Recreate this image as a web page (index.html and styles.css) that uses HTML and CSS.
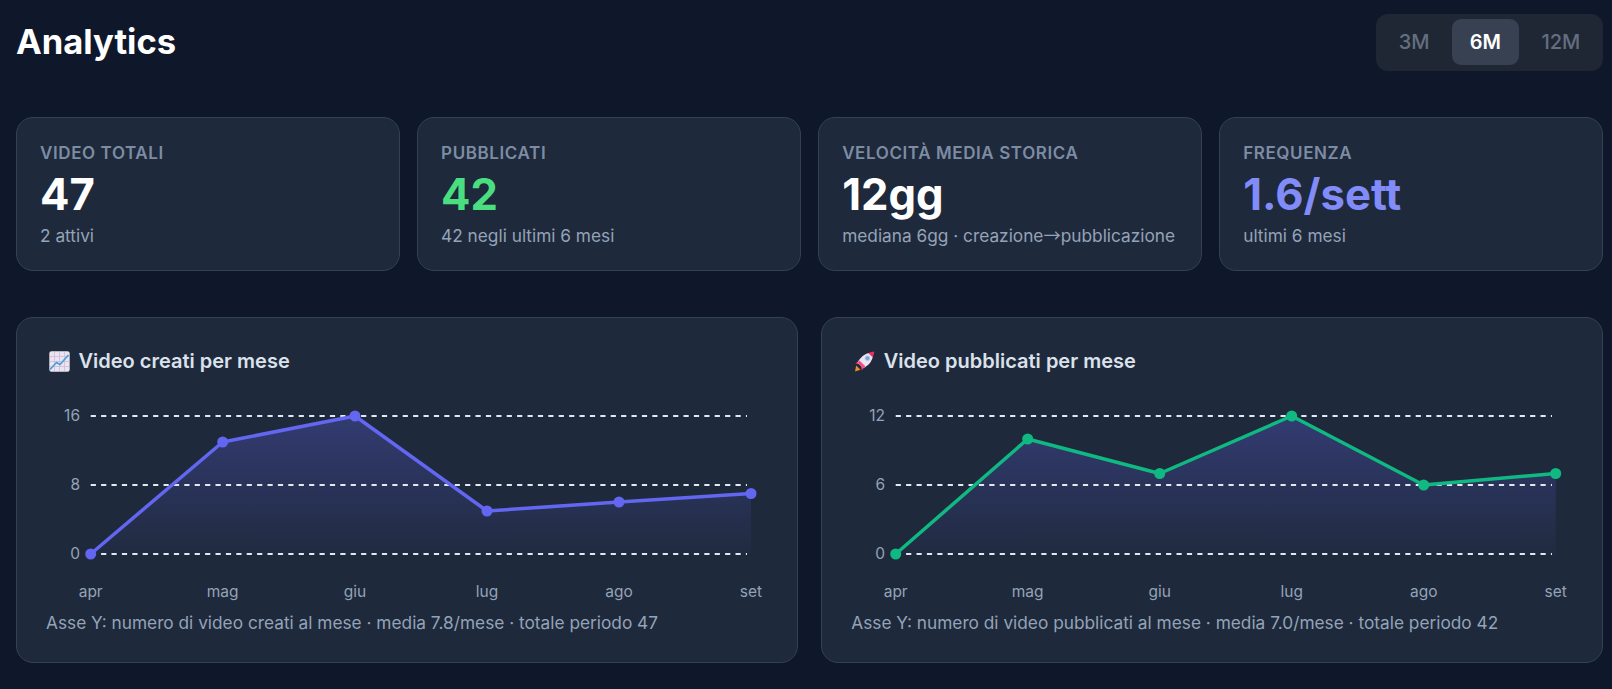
FILE: index.html
```html
<!DOCTYPE html>
<html lang="it">
<head>
<meta charset="utf-8">
<title>Analytics</title>
<link rel="stylesheet" href="styles.css">
</head>
<body>
<main class="page">
  <header class="top">
    <h1 class="title">Analytics</h1>
    <div class="range">
      <button class="range-btn">3M</button>
      <button class="range-btn active">6M</button>
      <button class="range-btn">12M</button>
    </div>
  </header>

  <section class="stats">
    <div class="stat">
      <div class="stat-label">VIDEO TOTALI</div>
      <div class="stat-value">47</div>
      <div class="stat-sub">2 attivi</div>
    </div>
    <div class="stat">
      <div class="stat-label">PUBBLICATI</div>
      <div class="stat-value green">42</div>
      <div class="stat-sub">42 negli ultimi 6 mesi</div>
    </div>
    <div class="stat">
      <div class="stat-label">VELOCITÀ MEDIA STORICA</div>
      <div class="stat-value">12gg</div>
      <div class="stat-sub">mediana 6gg · creazione<span class="arrow">→</span>pubblicazione</div>
    </div>
    <div class="stat">
      <div class="stat-label">FREQUENZA</div>
      <div class="stat-value purple">1.6/sett</div>
      <div class="stat-sub">ultimi 6 mesi</div>
    </div>
  </section>

  <section class="charts">
    <article class="chart-card">
      <h2 class="chart-title">
        <svg class="emoji" viewBox="0 0 21 21">
          <rect x="0.3" y="0.3" width="20.4" height="20.4" rx="2.2" fill="#ebe3ef"/>
          <path d="M5.5 1V20M10.5 1V20M15.5 1V20M1 5.5H20M1 10.5H20M1 15.5H20" stroke="#cbbdd8" stroke-width="0.8" fill="none"/>
          <path d="M1 18.5L7.5 11.5L11 13.5L19.5 4" stroke="#4a9ede" stroke-width="1.7" fill="none"/>
        </svg>
        Video creati per mese
      </h2>
      <svg class="plot">
        <defs>
          <linearGradient id="fillA" x1="0" y1="0" x2="0" y2="1">
            <stop offset="0" stop-color="#6366f1" stop-opacity="0.3"/>
            <stop offset="1" stop-color="#6366f1" stop-opacity="0.03"/>
          </linearGradient>
        </defs>
        <path class="area" d="M44.7 169L176.7 57L309 31L441 126L573 117L705 108.500V169Z" fill="url(#fillA)"/>
        <path class="grid" d="M44.700 31H701M44.700 100H701M44.700 169H701"/>
        <polyline class="line indigo" points="44.700,169 176.700,57 309,31 441,126 573,117 705,108.500"/>
        <g class="dots indigo-fill">
          <circle cx="44.700" cy="169" r="5.500"/><circle cx="176.700" cy="57" r="5.500"/><circle cx="309" cy="31" r="5.500"/><circle cx="441" cy="126" r="5.500"/><circle cx="573" cy="117" r="5.500"/><circle cx="705" cy="108.500" r="5.500"/>
        </g>
        <g class="y-labels">
          <text x="34" y="36">16</text><text x="34" y="105">8</text><text x="34" y="174">0</text>
        </g>
        <g class="x-labels">
          <text x="44.700" y="212">apr</text><text x="176.700" y="212">mag</text><text x="309" y="212">giu</text><text x="441" y="212">lug</text><text x="573" y="212">ago</text><text x="705" y="212">set</text>
        </g>
      </svg>
      <p class="note">Asse Y: numero di video creati al mese · media 7.8/mese · totale periodo 47</p>
    </article>

    <article class="chart-card">
      <h2 class="chart-title">
        <svg class="emoji" viewBox="0 0 21 21">
          <path d="M1 20.500L2.200 14.500L6.500 18.800Z" fill="#f08a24"/>
          <path d="M4 10.500L1.500 12.500L6 13.500Z" fill="#f5336e"/>
          <path d="M9.500 17L7.800 19.600L7 15Z" fill="#f5336e"/>
          <path d="M3.500 11.500C6.500 6 11 2.500 16 1.800L19 4.800C18.200 10 14.800 14.500 9.300 17.300Z" fill="#ece4ee"/>
          <path d="M14.500 2.300C16.500 1.300 18.500 0.800 20.300 0.600C20.100 2.500 19.600 4.500 18.500 6.300Z" fill="#ef2f63"/>
          <path d="M3.500 11.500L5.500 9.500L11.300 15.300L9.300 17.300Z" fill="#f24d86"/>
          <circle cx="13.500" cy="7.300" r="2.700" fill="#b8c4d8"/>
          <circle cx="13.500" cy="7.300" r="1.800" fill="#6aa6ea"/>
        </svg>
        Video pubblicati per mese
      </h2>
      <svg class="plot">
        <defs>
          <linearGradient id="fillB" x1="0" y1="0" x2="0" y2="1">
            <stop offset="0" stop-color="#6366f1" stop-opacity="0.3"/>
            <stop offset="1" stop-color="#6366f1" stop-opacity="0.03"/>
          </linearGradient>
        </defs>
        <path class="area" d="M44.700 169L176.700 54L308.700 88.500L440.700 31L572.700 100L704.700 88.500V169Z" fill="url(#fillB)"/>
        <path class="grid" d="M44.700 31H701M44.700 100H701M44.700 169H701"/>
        <polyline class="line emerald" points="44.700,169 176.700,54 308.700,88.500 440.700,31 572.700,100 704.700,88.500"/>
        <g class="dots emerald-fill">
          <circle cx="44.700" cy="169" r="5.500"/><circle cx="176.700" cy="54" r="5.500"/><circle cx="308.700" cy="88.500" r="5.500"/><circle cx="440.700" cy="31" r="5.500"/><circle cx="572.700" cy="100" r="5.500"/><circle cx="704.700" cy="88.500" r="5.500"/>
        </g>
        <g class="y-labels">
          <text x="34" y="36">12</text><text x="34" y="105">6</text><text x="34" y="174">0</text>
        </g>
        <g class="x-labels">
          <text x="44.700" y="212">apr</text><text x="176.700" y="212">mag</text><text x="308.700" y="212">giu</text><text x="440.700" y="212">lug</text><text x="572.700" y="212">ago</text><text x="704.700" y="212">set</text>
        </g>
      </svg>
      <p class="note">Asse Y: numero di video pubblicati al mese · media 7.0/mese · totale periodo 42</p>
    </article>
  </section>
</main>
</body>
</html>
```

FILE: styles.css
```css
* { box-sizing: border-box; }

html, body {
  margin: 0;
  background: #0f172a;
  font-family: Inter, "Liberation Sans", sans-serif;
  color: #fff;
}

.page {
  padding: 14px 9px 26px 16px;
}

.top {
  display: flex;
  align-items: center;
  justify-content: space-between;
  height: 57px;
  margin-bottom: 46px;
}

.title {
  margin: 0 0 2px;
  font-size: 34.560px;
  line-height: 54px;
  font-weight: 700;
}

.range {
  display: flex;
  gap: 5px;
  padding: 5px 5px 6px;
  background: #1f2735;
  border-radius: 12px;
}

.range-btn {
  height: 46px;
  padding: 0 17.700px;
  border: 0;
  border-radius: 9px;
  background: transparent;
  color: #646e7f;
  font: 500 20px Inter, sans-serif;
}

.range-btn.active {
  background: #384152;
  color: #fff;
  font-weight: 600;
}

.stats {
  display: grid;
  grid-template-columns: repeat(4, 1fr);
  gap: 17.280px;
  margin-bottom: 46px;
}

.stat {
  height: 154px;
  padding: 24px 23px;
  background: #1e293b;
  border: 1px solid #334155;
  border-radius: 17px;
}

.stat-label {
  font-size: 17px;
  line-height: 22px;
  font-weight: 600;
  letter-spacing: 0.6px;
  color: #7d8ca3;
}

.stat-value {
  margin-top: 5px;
  font-size: 43.600px;
  line-height: 52px;
  font-weight: 700;
  color: #fff;
}

.stat-value.green { color: #4ade80; }
.stat-value.purple { color: #818cf8; }

.stat-sub {
  margin-top: 4px;
  font-size: 17.280px;
  line-height: 21px;
  color: #94a3b8;
}

.arrow {
  font-family: "Noto Sans CJK JP", sans-serif;
  line-height: 1;
}

.charts {
  display: grid;
  grid-template-columns: repeat(2, 1fr);
  gap: 23.500px;
}

.chart-card {
  height: 346px;
  padding: 29px;
  background: #1e293b;
  border: 1px solid #334155;
  border-radius: 17px;
}

.chart-title {
  display: flex;
  align-items: center;
  gap: 8.500px;
  margin: 0 0 0 3px;
  height: 28px;
  font-size: 20px;
  font-weight: 600;
  color: #dbe2ec;
}

.emoji {
  width: 21px;
  height: 21px;
  flex: none;
}

.plot {
  display: block;
  width: 100%;
  height: 220px;
  margin-top: 10px;
}

.area { stroke: none; }

.grid {
  fill: none;
  stroke: #e2e8f0;
  stroke-width: 1.800;
  stroke-dasharray: 5.200 5.200;
}

.line {
  fill: none;
  stroke-width: 3.500;
  stroke-linejoin: round;
}

.indigo { stroke: #6366f1; }
.emerald { stroke: #10b981; }
.indigo-fill { fill: #6366f1; }
.emerald-fill { fill: #10b981; }

.y-labels text, .x-labels text {
  font-size: 15.500px;
  fill: #94a3b8;
}

.y-labels text { text-anchor: end; }
.x-labels text { text-anchor: middle; }

.note {
  margin: 7px 0 0;
  font-size: 17.280px;
  line-height: 22px;
  color: #94a3b8;
}
```
